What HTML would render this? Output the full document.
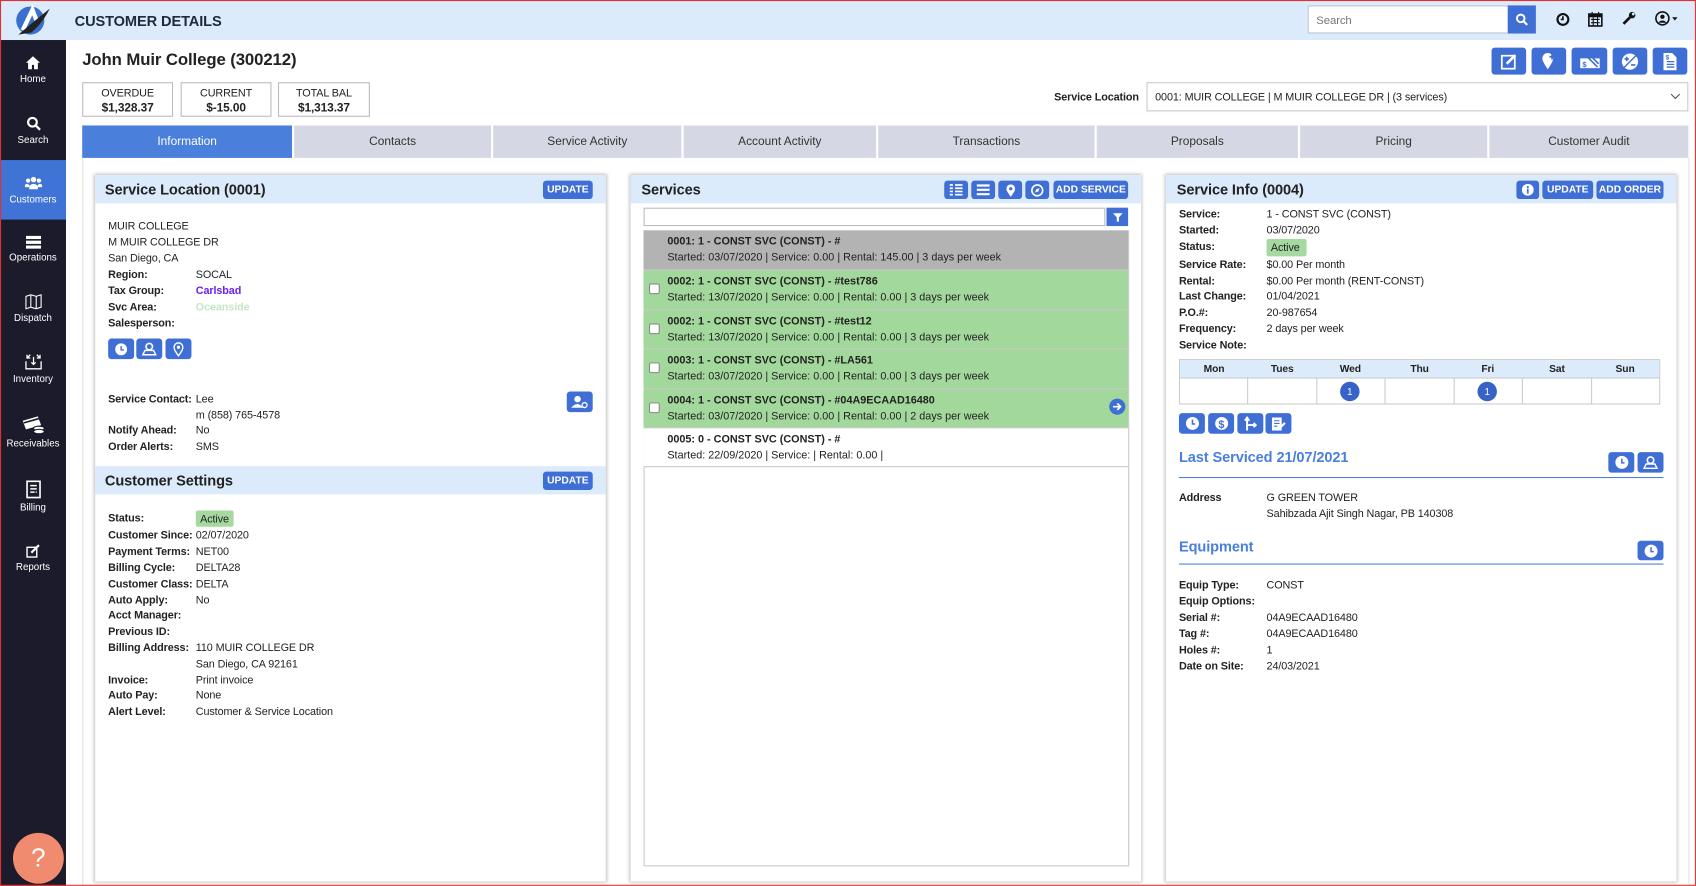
<!DOCTYPE html>
<html><head><meta charset="utf-8"><style>
*{box-sizing:border-box;margin:0;padding:0}
html,body{width:1696px;height:886px;overflow:hidden;background:#fff}
#w{position:absolute;left:0;top:0;width:1568px;height:819px;transform:scale(1.0816);transform-origin:0 0;font-family:"Liberation Sans",Arial,sans-serif;color:#222;font-size:10px}
.a{position:absolute}
.t{position:absolute;white-space:nowrap;line-height:14px;margin-top:1px;letter-spacing:-0.1px}
.b{font-weight:bold}
.btn{position:absolute;background:#3f6fd4;color:#fff;border-radius:3px;font-size:9.5px;font-weight:bold;text-align:center;display:flex;align-items:center;justify-content:center}
.hdr{position:absolute;background:#dcebfb}
.panel{position:absolute;background:#fff;box-shadow:0 0 3px 1px rgba(0,0,0,.25)}
.side{position:absolute;left:0;width:61px;text-align:center;color:#fff;font-size:9px}
.side svg{display:block;margin:0 auto 3px}
.tab{position:absolute;top:116px;height:30px;background:#d5d8e4;text-align:center;line-height:31px;font-size:11px;color:#333}
.row{position:absolute;left:595px;width:448px;border-bottom:1px solid #c8c8c8}
.row .l1{position:absolute;left:22px;top:5px;font-weight:bold;font-size:10px;white-space:nowrap}
.row .l2{position:absolute;left:22px;top:20px;font-size:10px;white-space:nowrap}
.cb{position:absolute;left:5px;top:12px;width:10px;height:10px;border:1px solid #888;background:#fff;border-radius:2px}
</style></head><body><div id="w">
<!-- header -->
<div class="a" style="left:0;top:0;width:1568px;height:37px;background:#dcebfb"></div>
<div class="a" style="left:0;top:0;width:1568px;height:819px;border:1px solid #e03030;z-index:10;pointer-events:none"></div>
<svg class="a" style="left:13px;top:4px" width="34" height="30" viewBox="0 0 34 30"><circle cx="15" cy="15" r="13" fill="#3a6fd0"/><path d="M8 24 L17 5 L22 18" stroke="#fff" stroke-width="4" fill="none"/><path d="M4 28 Q18 16 33 4 Q26 18 16 26 Z" fill="#222"/></svg>
<div class="t b" style="left:69px;top:12px;font-size:13.5px;color:#1f2a3c">CUSTOMER DETAILS</div>
<div class="a" style="left:1209px;top:5px;width:186px;height:26px;background:#fff;border:1px solid #b8c4d4"></div>
<div class="t" style="left:1217px;top:11px;color:#777;font-size:10.5px">Search</div>
<div class="a" style="left:1394px;top:5px;width:26px;height:26px;background:#3f6fd4"></div>
<svg class="a" style="left:1401px;top:12px" width="12" height="12" viewBox="0 0 12 12"><circle cx="5" cy="5" r="3.5" stroke="#fff" stroke-width="1.8" fill="none"/><path d="M7.5 7.5L11 11" stroke="#fff" stroke-width="2"/></svg>
<svg class="a" style="left:1438px;top:11px" width="14" height="14" viewBox="0 0 14 14"><circle cx="7" cy="7" r="5" stroke="#111" stroke-width="2" fill="none"/><path d="M7 4v3h-2" stroke="#111" stroke-width="1.5" fill="none"/></svg>
<svg class="a" style="left:1468px;top:10px" width="14" height="15" viewBox="0 0 14 15"><rect x="1" y="3" width="12" height="11" fill="none" stroke="#111" stroke-width="1.5"/><rect x="1" y="3" width="12" height="3" fill="#111"/><path d="M4 1v3M10 1v3M3 8h8M3 11h8M5 6v8M9 6v8" stroke="#111"/></svg>
<svg class="a" style="left:1499px;top:10px" width="14" height="14" viewBox="0 0 14 14"><path d="M2 12 L8 6" stroke="#111" stroke-width="2.5"/><circle cx="10" cy="4" r="3" fill="#111"/><circle cx="11" cy="3" r="1.3" fill="#dcebfb"/></svg>
<svg class="a" style="left:1530px;top:10px" width="22" height="15" viewBox="0 0 22 15"><circle cx="7" cy="7" r="6" stroke="#111" stroke-width="1.5" fill="none"/><circle cx="7" cy="5.5" r="2" fill="#111"/><path d="M3 11 Q7 7 11 11" fill="#111"/><path d="M16 6h5l-2.5 3z" fill="#111"/></svg>

<!-- sidebar -->
<div class="a" style="left:0;top:37px;width:61px;height:782px;background:#1c1b2b"></div>
<div class="a" style="left:0;top:148px;width:61px;height:55px;background:#3f74d6"></div>
<div class="side" style="top:51px"><svg width="15" height="14" viewBox="0 0 15 14"><path d="M7.5 1L1 7h2v6h3.5V9h2v4H12V7h2z" fill="#fff"/></svg>Home</div>
<div class="side" style="top:107px"><svg width="14" height="14" viewBox="0 0 14 14"><circle cx="6" cy="6" r="4" stroke="#fff" stroke-width="2" fill="none"/><path d="M9 9l4 4" stroke="#fff" stroke-width="2.2"/></svg>Search</div>
<div class="side" style="top:162px"><svg width="16" height="14" viewBox="0 0 16 14"><circle cx="8" cy="4" r="2.5" fill="#fff"/><circle cx="3" cy="5" r="2" fill="#fff"/><circle cx="13" cy="5" r="2" fill="#fff"/><path d="M4 13v-3q4-4 8 0v3z M0 11v-2q2-2 4 0v2z M12 11v-2q2-2 4 0v2z" fill="#fff"/></svg>Customers</div>
<div class="side" style="top:218px"><svg width="14" height="12" viewBox="0 0 14 12"><rect x="0" y="0" width="14" height="3" fill="#fff"/><rect x="0" y="4.5" width="14" height="3" fill="#fff"/><rect x="0" y="9" width="14" height="3" fill="#fff"/></svg>Operations</div>
<div class="side" style="top:272px"><svg width="16" height="14" viewBox="0 0 16 14"><path d="M1 2l4.5-1.5 5 1.5L15 0.5v11.5L10.5 13.5l-5-1.5L1 13.5z M5.5 0.5v11.5M10.5 2v11.5" stroke="#fff" stroke-width="1" fill="none"/></svg>Dispatch</div>
<div class="side" style="top:327px"><svg width="16" height="15" viewBox="0 0 16 15"><path d="M1 7v7h14V7M5 1L2 4M2 1v3h3M11 1l3 3M14 1v3h-3M8 3v7M6 8l2 2 2-2" stroke="#fff" stroke-width="1.2" fill="none"/></svg>Inventory</div>
<div class="side" style="top:384px"><svg width="22" height="18" viewBox="0 0 22 18"><path d="M1 5l14-4 3 8-14 4z" fill="#fff"/><path d="M2 7l14-4" stroke="#1c1b2b" stroke-width="1.5"/><ellipse cx="16" cy="12" rx="5" ry="2" fill="#fff" stroke="#1c1b2b"/><ellipse cx="16" cy="15" rx="5" ry="2" fill="#fff" stroke="#1c1b2b"/></svg>Receivables</div>
<div class="side" style="top:444px"><svg width="14" height="17" viewBox="0 0 14 17"><rect x="1" y="1" width="12" height="15" stroke="#fff" stroke-width="1.5" fill="none"/><path d="M4 5h6M4 8h6M4 11h4M9 11h1" stroke="#fff" stroke-width="1.3"/></svg>Billing</div>
<div class="side" style="top:503px"><svg width="14" height="13" viewBox="0 0 14 13"><rect x="1" y="3" width="9" height="9" stroke="#fff" stroke-width="1.3" fill="none"/><path d="M5 8l7-7" stroke="#fff" stroke-width="2"/></svg>Reports</div>
<div class="a" style="left:12px;top:770px;width:47px;height:47px;border-radius:50%;background:#f08b6f;color:#fff;font-size:24px;text-align:center;line-height:47px">?</div>

<!-- title -->
<div class="t b" style="left:76px;top:46px;font-size:15.5px;line-height:18px;color:#222">John Muir College (300212)</div>
<div class="a" style="left:76px;top:76px;width:84px;height:32px;border:1px solid #bbb"></div>
<div class="a" style="left:167px;top:76px;width:84px;height:32px;border:1px solid #bbb"></div>
<div class="a" style="left:257px;top:76px;width:85px;height:32px;border:1px solid #bbb"></div>
<div class="t" style="left:76px;width:84px;text-align:center;top:79px;font-size:10px">OVERDUE</div>
<div class="t b" style="left:76px;width:84px;text-align:center;top:92px;font-size:11px">$1,328.37</div>
<div class="t" style="left:167px;width:84px;text-align:center;top:79px;font-size:10px">CURRENT</div>
<div class="t b" style="left:167px;width:84px;text-align:center;top:92px;font-size:11px">$-15.00</div>
<div class="t" style="left:257px;width:85px;text-align:center;top:79px;font-size:10px">TOTAL BAL</div>
<div class="t b" style="left:257px;width:85px;text-align:center;top:92px;font-size:11px">$1,313.37</div>

<div class="btn" style="left:1379px;top:44px;width:32px;height:25px"><svg width="16" height="16" viewBox="0 0 16 16"><rect x="1.5" y="2.5" width="12" height="12" stroke="#fff" stroke-width="1.6" fill="none"/><path d="M6 10l8-8" stroke="#fff" stroke-width="2.4"/></svg></div>
<div class="btn" style="left:1416px;top:44px;width:32px;height:25px"><svg width="14" height="17" viewBox="0 0 14 17"><path d="M6 16C2 10 1 8 1 6a5 5 0 0 1 10 0c0 2-1 4-5 10z" fill="#fff"/><path d="M10 2v5M7.5 4.5h5" stroke="#3f6fd4" stroke-width="1.6"/></svg></div>
<div class="btn" style="left:1453px;top:44px;width:33px;height:25px"><svg width="20" height="14" viewBox="0 0 20 14"><rect x="1" y="4" width="18" height="9" fill="#fff"/><text x="3" y="12" font-size="7" fill="#3f6fd4" font-family="Liberation Sans">$</text><path d="M8 3l9 9M11 2l7 7" stroke="#3f6fd4" stroke-width="1.5"/></svg></div>
<div class="btn" style="left:1491px;top:44px;width:32px;height:25px"><svg width="18" height="18" viewBox="0 0 18 18"><circle cx="9" cy="9" r="7.5" fill="#fff"/><path d="M3 15L15 3" stroke="#3f6fd4" stroke-width="1.3"/><path d="M4 6.5h4M6 4.5v4M10 12h4" stroke="#3f6fd4" stroke-width="1.5"/></svg></div>
<div class="btn" style="left:1528px;top:44px;width:32px;height:25px"><svg width="14" height="18" viewBox="0 0 14 18"><path d="M1 1h8l4 4v12H1z" fill="#fff"/><path d="M4 9h7M4 11.5h7M4 14h7" stroke="#3f6fd4" stroke-width="1.2"/><text x="3" y="7" font-size="6" fill="#3f6fd4" font-family="Liberation Sans">$</text></svg></div>

<div class="t b" style="left:960px;width:93px;text-align:right;top:83px;font-size:10px">Service Location</div>
<div class="a" style="left:1060px;top:76px;width:501px;height:27px;border:1px solid #c8c8c8"></div>
<div class="t" style="left:1068px;top:83px;font-size:10px">0001: MUIR COLLEGE | M MUIR COLLEGE DR | (3 services)</div>
<svg class="a" style="left:1544px;top:86px" width="10" height="7" viewBox="0 0 10 7"><path d="M1 1l4 4 4-4" stroke="#555" fill="none"/></svg>

<!-- tabs -->
<div class="tab" style="left:76px;width:194px;background:#4a7fdb;color:#fff">Information</div>
<div class="tab" style="left:272px;width:182px">Contacts</div>
<div class="tab" style="left:456px;width:174px">Service Activity</div>
<div class="tab" style="left:632px;width:178px">Account Activity</div>
<div class="tab" style="left:812px;width:200px">Transactions</div>
<div class="tab" style="left:1014px;width:186px">Proposals</div>
<div class="tab" style="left:1202px;width:173px">Pricing</div>
<div class="tab" style="left:1377px;width:184px">Customer Audit</div>
<div class="a" style="left:76px;top:146px;width:1486px;height:673px;border-left:1px solid #e2e2e2;border-right:1px solid #e2e2e2"></div>

<!-- panel 1 -->
<div class="panel" style="left:88px;top:162px;width:472px;height:653px"></div>
<div class="hdr" style="left:88px;top:162px;width:472px;height:26px"></div>
<div class="t b" style="left:97px;top:168px;font-size:13.5px">Service Location (0001)</div>
<div class="btn" style="left:502px;top:167px;width:46px;height:17px">UPDATE</div>
<div class="t" style="left:100px;top:202px">MUIR COLLEGE</div>
<div class="t" style="left:100px;top:217px">M MUIR COLLEGE DR</div>
<div class="t" style="left:100px;top:232px">San Diego, CA</div>
<div class="t b" style="left:100px;top:247px">Region:</div><div class="t" style="left:181px;top:247px">SOCAL</div>
<div class="t b" style="left:100px;top:262px">Tax Group:</div><div class="t b" style="left:181px;top:262px;color:#6a1ff0">Carlsbad</div>
<div class="t b" style="left:100px;top:277px">Svc Area:</div><div class="t b" style="left:181px;top:277px;color:#c5e6c5">Oceanside</div>
<div class="t b" style="left:100px;top:292px">Salesperson:</div>
<div class="btn" style="left:100px;top:313px;width:24px;height:19px"><svg width="12" height="12"><circle cx="6" cy="6" r="5.5" fill="#fff"/><path d="M6 3v3.5h2.5" stroke="#3f6fd4" stroke-width="1.3" fill="none"/></svg></div>
<div class="btn" style="left:126px;top:313px;width:24px;height:19px"><svg width="14" height="13" viewBox="0 0 14 13"><circle cx="7" cy="4.5" r="3" stroke="#fff" stroke-width="1.5" fill="none"/><path d="M1 12l2-4h8l2 4z" stroke="#fff" stroke-width="1.3" fill="none"/></svg></div>
<div class="btn" style="left:153px;top:313px;width:24px;height:19px"><svg width="10" height="14" viewBox="0 0 10 14"><path d="M5 13C1.5 8 1 7 1 5a4 4 0 0 1 8 0c0 2-.5 3-4 8z" stroke="#fff" stroke-width="1.3" fill="none"/><circle cx="5" cy="5" r="1.5" fill="#fff"/></svg></div>
<div class="t b" style="left:100px;top:362px">Service Contact:</div><div class="t" style="left:181px;top:362px">Lee</div>
<div class="t" style="left:181px;top:377px">m (858) 765-4578</div>
<div class="t b" style="left:100px;top:391px">Notify Ahead:</div><div class="t" style="left:181px;top:391px">No</div>
<div class="t b" style="left:100px;top:406px">Order Alerts:</div><div class="t" style="left:181px;top:406px">SMS</div>
<div class="btn" style="left:524px;top:362px;width:24px;height:19px"><svg width="16" height="13" viewBox="0 0 16 13"><circle cx="6" cy="4" r="3" fill="#fff"/><path d="M0 12q6-7 11 0z" fill="#fff"/><circle cx="12.5" cy="9.5" r="2.3" stroke="#fff" stroke-width="1.2" fill="#3f6fd4"/></svg></div>
<div class="hdr" style="left:88px;top:431px;width:472px;height:26px"></div>
<div class="t b" style="left:97px;top:437px;font-size:13.5px">Customer Settings</div>
<div class="btn" style="left:502px;top:436px;width:46px;height:17px">UPDATE</div>
<div class="t b" style="left:100px;top:472px">Status:</div>
<div class="a" style="left:181px;top:472px;width:35px;height:15px;background:#a5d9a0;border-radius:2px"></div><div class="t" style="left:185px;top:473px">Active</div>
<div class="t b" style="left:100px;top:488px">Customer Since:</div><div class="t" style="left:181px;top:488px">02/07/2020</div>
<div class="t b" style="left:100px;top:503px">Payment Terms:</div><div class="t" style="left:181px;top:503px">NET00</div>
<div class="t b" style="left:100px;top:518px">Billing Cycle:</div><div class="t" style="left:181px;top:518px">DELTA28</div>
<div class="t b" style="left:100px;top:533px">Customer Class:</div><div class="t" style="left:181px;top:533px">DELTA</div>
<div class="t b" style="left:100px;top:548px">Auto Apply:</div><div class="t" style="left:181px;top:548px">No</div>
<div class="t b" style="left:100px;top:562px">Acct Manager:</div>
<div class="t b" style="left:100px;top:577px">Previous ID:</div>
<div class="t b" style="left:100px;top:592px">Billing Address:</div><div class="t" style="left:181px;top:592px">110 MUIR COLLEGE DR</div>
<div class="t" style="left:181px;top:607px">San Diego, CA 92161</div>
<div class="t b" style="left:100px;top:622px">Invoice:</div><div class="t" style="left:181px;top:622px">Print invoice</div>
<div class="t b" style="left:100px;top:636px">Auto Pay:</div><div class="t" style="left:181px;top:636px">None</div>
<div class="t b" style="left:100px;top:651px">Alert Level:</div><div class="t" style="left:181px;top:651px">Customer &amp; Service Location</div>

<!-- panel 2 -->
<div class="panel" style="left:583px;top:162px;width:472px;height:653px"></div>
<div class="hdr" style="left:583px;top:162px;width:472px;height:26px"></div>
<div class="t b" style="left:593px;top:168px;font-size:13.5px">Services</div>
<div class="btn" style="left:873px;top:167px;width:22px;height:17px"><svg width="12" height="11"><path d="M0 1h3M5 1h7M0 4h3M5 4h7M0 7h3M5 7h7M0 10h3M5 10h7" stroke="#fff" stroke-width="1.6"/></svg></div>
<div class="btn" style="left:898px;top:167px;width:22px;height:17px"><svg width="12" height="11"><path d="M0 1.5h12M0 5.5h12M0 9.5h12" stroke="#fff" stroke-width="2"/></svg></div>
<div class="btn" style="left:923px;top:167px;width:22px;height:17px"><svg width="9" height="12" viewBox="0 0 9 12"><path d="M4.5 12C1 7 .5 6 .5 4.5a4 4 0 0 1 8 0c0 1.5-.5 2.5-4 7.5z" fill="#fff"/><circle cx="4.5" cy="4.5" r="1.5" fill="#3f6fd4"/></svg></div>
<div class="btn" style="left:948px;top:167px;width:22px;height:17px"><svg width="12" height="12"><circle cx="6" cy="6" r="5" stroke="#fff" stroke-width="1.5" fill="none"/><path d="M4 8l1-3 3-1-1 3z" fill="#fff"/></svg></div>
<div class="btn" style="left:974px;top:167px;width:69px;height:17px">ADD SERVICE</div>
<div class="a" style="left:595px;top:192px;width:427px;height:17px;border:1px solid #bbb"></div>
<div class="btn" style="left:1023px;top:192px;width:20px;height:17px;border-radius:0"><svg width="9" height="8"><path d="M0 0h9L5.5 4v4h-2V4z" fill="#fff"/></svg></div>
<div class="a" style="left:595px;top:213px;width:449px;height:588px;border:1px solid #c8c8c8"></div>
<div class="row" style="top:213px;height:37px;background:#b3b3b3"><div class="l1">0001: 1 - CONST SVC (CONST) - #</div><div class="l2">Started: 03/07/2020 | Service: 0.00 | Rental: 145.00 | 3 days per week</div></div>
<div class="row" style="top:250px;height:37px;background:#a3d89c"><div class="cb"></div><div class="l1">0002: 1 - CONST SVC (CONST) - #test786</div><div class="l2">Started: 13/07/2020 | Service: 0.00 | Rental: 0.00 | 3 days per week</div></div>
<div class="row" style="top:287px;height:36px;background:#a3d89c"><div class="cb"></div><div class="l1">0002: 1 - CONST SVC (CONST) - #test12</div><div class="l2">Started: 13/07/2020 | Service: 0.00 | Rental: 0.00 | 3 days per week</div></div>
<div class="row" style="top:323px;height:37px;background:#a3d89c"><div class="cb"></div><div class="l1">0003: 1 - CONST SVC (CONST) - #LA561</div><div class="l2">Started: 03/07/2020 | Service: 0.00 | Rental: 0.00 | 3 days per week</div></div>
<div class="row" style="top:360px;height:36px;background:#a3d89c"><div class="cb"></div><div class="l1">0004: 1 - CONST SVC (CONST) - #04A9ECAAD16480</div><div class="l2">Started: 03/07/2020 | Service: 0.00 | Rental: 0.00 | 2 days per week</div>
<svg class="a" style="left:430px;top:8px" width="16" height="16"><circle cx="8" cy="8" r="7.5" fill="#3f6fd4"/><path d="M4 8h7M8 5l3 3-3 3" stroke="#fff" stroke-width="1.6" fill="none"/></svg></div>
<div class="row" style="top:396px;height:36px;background:#fff"><div class="l1">0005: 0 - CONST SVC (CONST) - #</div><div class="l2">Started: 22/09/2020 | Service: | Rental: 0.00 |</div></div>

<!-- panel 3 -->
<div class="panel" style="left:1078px;top:162px;width:472px;height:653px"></div>
<div class="hdr" style="left:1078px;top:162px;width:472px;height:26px"></div>
<div class="t b" style="left:1088px;top:168px;font-size:13.5px">Service Info (0004)</div>
<div class="btn" style="left:1402px;top:167px;width:21px;height:17px"><svg width="11" height="11"><circle cx="5.5" cy="5.5" r="5.5" fill="#fff"/><rect x="4.7" y="4.5" width="1.6" height="4.5" fill="#3f6fd4"/><circle cx="5.5" cy="3" r="1" fill="#3f6fd4"/></svg></div>
<div class="btn" style="left:1426px;top:167px;width:47px;height:17px">UPDATE</div>
<div class="btn" style="left:1476px;top:167px;width:62px;height:17px">ADD ORDER</div>
<div class="t b" style="left:1090px;top:191px">Service:</div><div class="t" style="left:1171px;top:191px">1 - CONST SVC (CONST)</div>
<div class="t b" style="left:1090px;top:206px">Started:</div><div class="t" style="left:1171px;top:206px">03/07/2020</div>
<div class="t b" style="left:1090px;top:221px">Status:</div>
<div class="a" style="left:1171px;top:221px;width:37px;height:16px;background:#a5d9a0;border-radius:2px"></div><div class="t" style="left:1175px;top:222px">Active</div>
<div class="t b" style="left:1090px;top:238px">Service Rate:</div><div class="t" style="left:1171px;top:238px">$0.00 Per month</div>
<div class="t b" style="left:1090px;top:253px">Rental:</div><div class="t" style="left:1171px;top:253px">$0.00 Per month (RENT-CONST)</div>
<div class="t b" style="left:1090px;top:267px">Last Change:</div><div class="t" style="left:1171px;top:267px">01/04/2021</div>
<div class="t b" style="left:1090px;top:282px">P.O.#:</div><div class="t" style="left:1171px;top:282px">20-987654</div>
<div class="t b" style="left:1090px;top:297px">Frequency:</div><div class="t" style="left:1171px;top:297px">2 days per week</div>
<div class="t b" style="left:1090px;top:312px">Service Note:</div>
<div class="a" style="left:1090px;top:332px;width:445px;height:42px;border:1px solid #ccc"></div>
<div class="a" style="left:1091px;top:333px;width:443px;height:17px;background:#dcebfb;border-bottom:1px solid #ccc"></div>
<div class="a" style="left:1153px;top:350px;width:1px;height:23px;background:#ccc"></div>
<div class="a" style="left:1217px;top:350px;width:1px;height:23px;background:#ccc"></div>
<div class="a" style="left:1280px;top:350px;width:1px;height:23px;background:#ccc"></div>
<div class="a" style="left:1344px;top:350px;width:1px;height:23px;background:#ccc"></div>
<div class="a" style="left:1407px;top:350px;width:1px;height:23px;background:#ccc"></div>
<div class="a" style="left:1471px;top:350px;width:1px;height:23px;background:#ccc"></div>
<div class="t b" style="left:1091px;width:63px;text-align:center;top:334px;font-size:9.5px">Mon</div>
<div class="t b" style="left:1154px;width:63px;text-align:center;top:334px;font-size:9.5px">Tues</div>
<div class="t b" style="left:1217px;width:63px;text-align:center;top:334px;font-size:9.5px">Wed</div>
<div class="t b" style="left:1281px;width:63px;text-align:center;top:334px;font-size:9.5px">Thu</div>
<div class="t b" style="left:1344px;width:63px;text-align:center;top:334px;font-size:9.5px">Fri</div>
<div class="t b" style="left:1408px;width:63px;text-align:center;top:334px;font-size:9.5px">Sat</div>
<div class="t b" style="left:1471px;width:63px;text-align:center;top:334px;font-size:9.5px">Sun</div>
<div class="a" style="left:1239px;top:353px;width:18px;height:18px;border-radius:50%;background:#3763c8;color:#fff;font-size:9px;text-align:center;line-height:18px">1</div>
<div class="a" style="left:1366px;top:353px;width:18px;height:18px;border-radius:50%;background:#3763c8;color:#fff;font-size:9px;text-align:center;line-height:18px">1</div>
<div class="btn" style="left:1090px;top:382px;width:24px;height:19px"><svg width="13" height="13"><circle cx="6.5" cy="6.5" r="6" fill="#fff"/><path d="M6.5 3v4h2.5" stroke="#3f6fd4" stroke-width="1.4" fill="none"/></svg></div>
<div class="btn" style="left:1117px;top:382px;width:24px;height:19px"><svg width="13" height="13"><circle cx="6.5" cy="6.5" r="6" fill="#fff"/><text x="3.5" y="10.5" font-size="10" font-weight="bold" fill="#3f6fd4" font-family="Liberation Sans">$</text></svg></div>
<div class="btn" style="left:1144px;top:382px;width:24px;height:19px"><svg width="13" height="13"><path d="M3 13V2M1 4l2-3 2 3M3 8h8M9 6l2 2-2 2" stroke="#fff" stroke-width="1.8" fill="none"/></svg></div>
<div class="btn" style="left:1170px;top:382px;width:24px;height:19px"><svg width="14" height="14"><path d="M1 1h9v12H1z" fill="#fff"/><path d="M3 4h5M3 6.5h5M3 9h3" stroke="#3f6fd4"/><path d="M7 12l6-6" stroke="#fff" stroke-width="2"/></svg></div>
<div class="t b" style="left:1090px;top:414px;font-size:13.5px;line-height:16px;color:#4a7fdb">Last Serviced 21/07/2021</div>
<div class="btn" style="left:1487px;top:418px;width:24px;height:19px"><svg width="13" height="13"><circle cx="6.5" cy="6.5" r="6" fill="#fff"/><path d="M6.5 3v4h2.5" stroke="#3f6fd4" stroke-width="1.4" fill="none"/></svg></div>
<div class="btn" style="left:1514px;top:418px;width:24px;height:19px"><svg width="14" height="13" viewBox="0 0 14 13"><circle cx="7" cy="4.5" r="3" stroke="#fff" stroke-width="1.5" fill="none"/><path d="M1 12l2-4h8l2 4z" stroke="#fff" stroke-width="1.3" fill="none"/></svg></div>
<div class="a" style="left:1090px;top:441px;width:448px;height:1px;background:#4a7fdb"></div>
<div class="t b" style="left:1090px;top:453px">Address</div><div class="t" style="left:1171px;top:453px">G GREEN TOWER</div>
<div class="t" style="left:1171px;top:468px">Sahibzada Ajit Singh Nagar, PB 140308</div>
<div class="t b" style="left:1090px;top:497px;font-size:13.5px;line-height:16px;color:#4a7fdb">Equipment</div>
<div class="btn" style="left:1514px;top:500px;width:24px;height:18px"><svg width="13" height="13"><circle cx="6.5" cy="6.5" r="6" fill="#fff"/><path d="M6.5 3v4h2.5" stroke="#3f6fd4" stroke-width="1.4" fill="none"/></svg></div>
<div class="a" style="left:1090px;top:521px;width:448px;height:1px;background:#4a7fdb"></div>
<div class="t b" style="left:1090px;top:534px">Equip Type:</div><div class="t" style="left:1171px;top:534px">CONST</div>
<div class="t b" style="left:1090px;top:549px">Equip Options:</div>
<div class="t b" style="left:1090px;top:564px">Serial #:</div><div class="t" style="left:1171px;top:564px">04A9ECAAD16480</div>
<div class="t b" style="left:1090px;top:579px">Tag #:</div><div class="t" style="left:1171px;top:579px">04A9ECAAD16480</div>
<div class="t b" style="left:1090px;top:594px">Holes #:</div><div class="t" style="left:1171px;top:594px">1</div>
<div class="t b" style="left:1090px;top:609px">Date on Site:</div><div class="t" style="left:1171px;top:609px">24/03/2021</div>
</div></body></html>
